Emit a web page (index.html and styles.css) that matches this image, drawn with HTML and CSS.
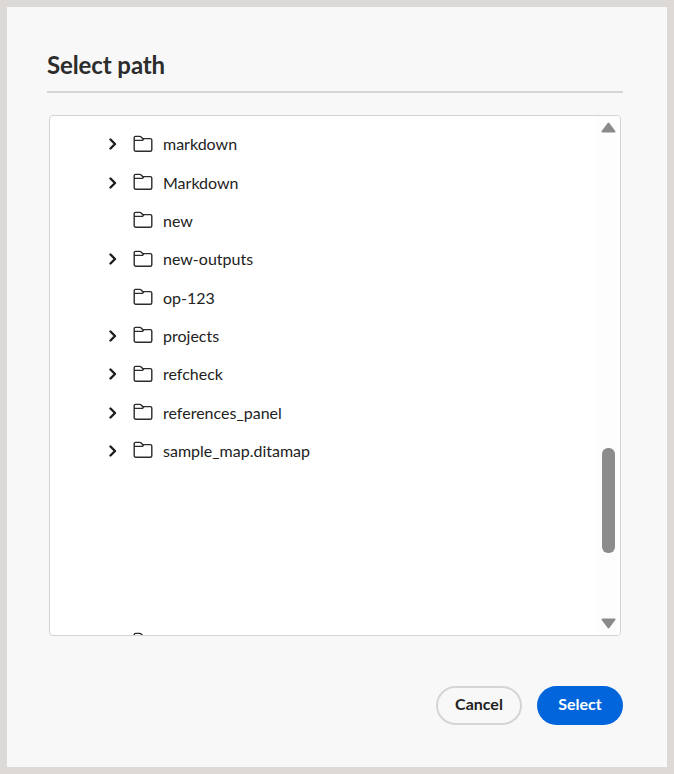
FILE: index.html
```html
<!DOCTYPE html>
<html lang="en">
<head>
    <meta charset="UTF-8">
    <title>Select path</title>
    <link rel="stylesheet" href="styles.css">
</head>
<body>
    <svg class="sprite" width="0" height="0">
        <symbol id="chevron" viewBox="0 0 12 12">
            <path d="M3.500 1.500 8 6l-4.500 4.500" fill="none" stroke="#1d1d1d" stroke-width="2.400" stroke-linecap="round" stroke-linejoin="round"/>
        </symbol>
        <symbol id="folder" viewBox="0 0 20 18">
            <path d="M1.200 5.400V2.700a1.300 1.300 0 0 1 1.300-1.300h4.300c.6 0 1 .2 1.400.7L9.600 3.600h7.700a1.500 1.500 0 0 1 1.500 1.500v9.600a1.500 1.500 0 0 1-1.500 1.500H2.700a1.500 1.500 0 0 1-1.500-1.500V5.400zM1.200 5.400h8.400l1.400-1.800" fill="none" stroke="#2c2c2c" stroke-width="1.400" stroke-linejoin="round"/>
        </symbol>
    </svg>

    <div class="dialog">
        <h1 class="title">Select path</h1>
        <div class="divider"></div>

        <div class="tree-box">
            <ul class="tree">
                <li class="row"><svg class="chevron"><use href="#chevron"/></svg><svg class="folder"><use href="#folder"/></svg><span class="label">markdown</span></li>
                <li class="row"><svg class="chevron"><use href="#chevron"/></svg><svg class="folder"><use href="#folder"/></svg><span class="label">Markdown</span></li>
                <li class="row"><span class="no-chevron"></span><svg class="folder"><use href="#folder"/></svg><span class="label">new</span></li>
                <li class="row"><svg class="chevron"><use href="#chevron"/></svg><svg class="folder"><use href="#folder"/></svg><span class="label">new-outputs</span></li>
                <li class="row"><span class="no-chevron"></span><svg class="folder"><use href="#folder"/></svg><span class="label">op-123</span></li>
                <li class="row"><svg class="chevron"><use href="#chevron"/></svg><svg class="folder"><use href="#folder"/></svg><span class="label">projects</span></li>
                <li class="row"><svg class="chevron"><use href="#chevron"/></svg><svg class="folder"><use href="#folder"/></svg><span class="label">refcheck</span></li>
                <li class="row"><svg class="chevron"><use href="#chevron"/></svg><svg class="folder"><use href="#folder"/></svg><span class="label">references_panel</span></li>
                <li class="row"><svg class="chevron"><use href="#chevron"/></svg><svg class="folder"><use href="#folder"/></svg><span class="label">sample_map.ditamap</span></li>
                <li class="row row-cut"><span class="no-chevron"></span><svg class="folder"><use href="#folder"/></svg></li>
            </ul>
            <div class="scrollbar">
                <svg class="arrow" viewBox="0 0 15 11"><path d="M7.500 1.500 1.500 9.500h12z" fill="#8a8a8a" stroke="#8a8a8a" stroke-width="2" stroke-linejoin="round"/></svg>
                <div class="track">
                    <div class="thumb"></div>
                </div>
                <svg class="arrow" viewBox="0 0 15 11"><path d="M1.500 1.500h12L7.500 9.500z" fill="#8a8a8a" stroke="#8a8a8a" stroke-width="2" stroke-linejoin="round"/></svg>
            </div>
        </div>

        <div class="actions">
            <button class="btn btn-cancel">Cancel</button>
            <button class="btn btn-select">Select</button>
        </div>
    </div>
</body>
</html>
```

FILE: styles.css
```css
* {
    box-sizing: border-box;
}
html, body {
    height: 100%;
}
body {
    margin: 0;
    padding: 7px;
    background-color: #dcd9d6;
    font-family: Lato, Arial, sans-serif;
    color: #222;
}
.sprite {
    display: block;
}
.dialog {
    width: 660px;
    height: 760px;
    padding: 40px 44px 42px 40px;
    background-color: #f8f8f8;
    display: flex;
    flex-direction: column;
}
.title {
    margin: 0;
    height: 36px;
    line-height: 36px;
    font-size: 24px;
    font-weight: 700;
    letter-spacing: -0.1px;
    color: #2c2c2c;
}
.divider {
    height: 2px;
    margin-top: 8px;
    background-color: #d5d5d5;
}
.tree-box {
    height: 521px;
    margin: 22px 2px 0;
    background-color: #fff;
    border: 1px solid #d3d3d3;
    border-radius: 4px;
    display: flex;
    overflow: hidden;
}
.tree {
    flex: 1;
    list-style: none;
    margin: 0;
    padding: 9px 0 0 57px;
}
.row {
    height: 38.350px;
    display: flex;
    align-items: center;
}
.row-cut {
    margin-top: 152px;
}
.chevron {
    width: 12px;
    height: 12px;
    margin-right: 14px;
    flex: none;
}
.no-chevron {
    width: 12px;
    margin-right: 14px;
    flex: none;
}
.folder {
    width: 20px;
    height: 18px;
    margin-top: -1px;
    flex: none;
}
.label {
    margin-left: 10px;
    margin-top: -1px;
    font-size: 16px;
    color: #222;
}
.scrollbar {
    width: 23px;
    padding: 6px 0 6px;
    background-color: #fdfdfd;
    display: flex;
    flex-direction: column;
    align-items: center;
}
.arrow {
    width: 15px;
    height: 11px;
    flex: none;
}
.track {
    flex: 1;
    width: 13px;
    padding-top: 315px;
}
.thumb {
    height: 105px;
    background-color: #8c8c8c;
    border-radius: 6px;
}
.actions {
    margin-top: auto;
    display: flex;
    justify-content: flex-end;
    gap: 15px;
}
.btn {
    height: 39px;
    padding: 0 0 5px;
    border-radius: 20px;
    font-family: inherit;
    font-size: 16px;
    font-weight: 700;
}
.btn-cancel {
    width: 86px;
    background-color: transparent;
    border: 2px solid #d5d5d5;
    color: #222;
}
.btn-select {
    width: 86px;
    background-color: #0265dc;
    border: none;
    color: #fff;
}
```
